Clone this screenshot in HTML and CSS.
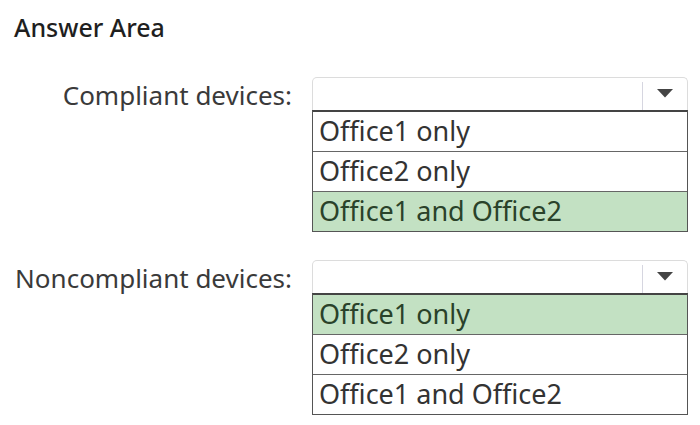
FILE: index.html
```html
<!DOCTYPE html>
<html lang="en">
<head>
    <meta charset="UTF-8">
    <title>Answer Area</title>
    <link rel="stylesheet" href="styles.css">
</head>
<body>
    <h2 class="title">Answer Area</h2>

    <div class="question">
        <div class="label">Compliant devices:</div>
        <div class="dropdown">
            <div class="select">
                <span class="arrow-box">
                    <svg width="18" height="10" viewBox="0 0 18 10"><polygon points="1,1 17,1 9,9.5" fill="#444"/></svg>
                </span>
            </div>
            <ul class="options">
                <li>Office1 only</li>
                <li>Office2 only</li>
                <li class="selected">Office1 and Office2</li>
            </ul>
        </div>
    </div>

    <div class="question">
        <div class="label">Noncompliant devices:</div>
        <div class="dropdown">
            <div class="select">
                <span class="arrow-box">
                    <svg width="18" height="10" viewBox="0 0 18 10"><polygon points="1,1 17,1 9,9.5" fill="#444"/></svg>
                </span>
            </div>
            <ul class="options">
                <li class="selected">Office1 only</li>
                <li>Office2 only</li>
                <li>Office1 and Office2</li>
            </ul>
        </div>
    </div>
</body>
</html>
```
FILE: styles.css
```css
body {
    margin: 0;
    padding: 0;
    background: #fff;
    font-family: "Noto Sans", "Open Sans", sans-serif;
    color: #333;
}

.title {
    margin: 0;
    padding: 10px 0 0 14px;
    font-size: 25px;
    font-weight: 500;
    color: #1f1f1f;
    line-height: 34px;
    letter-spacing: 0;
}

.question {
    display: grid;
    grid-template-columns: 292px 376px;
    column-gap: 20px;
    align-items: start;
    margin-top: 33px;
}

.question + .question {
    margin-top: 28px;
}

.label {
    text-align: right;
    font-size: 26px;
    line-height: 36px;
    color: #3a3a3a;
}

.select {
    height: 32px;
    border: 1px solid #dcdcdc;
    border-bottom: none;
    border-radius: 5px 5px 0 0;
    display: flex;
    justify-content: flex-end;
}

.arrow-box {
    width: 44px;
    border-left: 1px solid #d6d6e0;
    margin: 4px 0 0 0;
    display: flex;
    align-items: flex-start;
    justify-content: center;
    padding-top: 6px;
}

.options {
    list-style: none;
    margin: 0;
    padding: 0;
    border: 1px solid #555;
    border-top: 2px solid #444;
}

.options li {
    height: 39px;
    line-height: 38px;
    padding-left: 6px;
    font-size: 27px;
    color: #333;
    border-top: 1px solid #666;
}

.options li:first-child {
    border-top: none;
}

.options li.selected {
    background: #c3e1c3;
    color: #2a422a;
}
```
